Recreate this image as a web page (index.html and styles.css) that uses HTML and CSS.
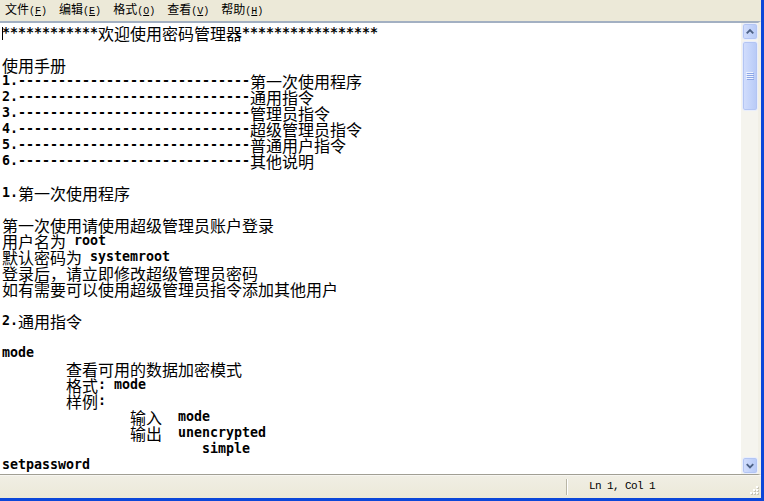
FILE: index.html
```html
<!DOCTYPE html>
<html lang="zh-CN">
<head>
<meta charset="utf-8">
<title>记事本</title>
<link rel="stylesheet" href="styles.css">
</head>
<body>
<div class="window">
  <nav class="menubar">
    <span class="menu-item">文件<span class="acc">(<u>F</u>)</span></span>
    <span class="menu-item">编辑<span class="acc">(<u>E</u>)</span></span>
    <span class="menu-item">格式<span class="acc">(<u>O</u>)</span></span>
    <span class="menu-item">查看<span class="acc">(<u>V</u>)</span></span>
    <span class="menu-item">帮助<span class="acc">(<u>H</u>)</span></span>
  </nav>
  <div class="editor">
<pre class="text"><span class="caret"></span>************<span class="c">欢迎使用密码管理器</span>*****************

<span class="c">使用手册</span>
1.-----------------------------<span class="c">第一次使用程序</span>
2.-----------------------------<span class="c">通用指令</span>
3.-----------------------------<span class="c">管理员指令</span>
4.-----------------------------<span class="c">超级管理员指令</span>
5.-----------------------------<span class="c">普通用户指令</span>
6.-----------------------------<span class="c">其他说明</span>

1.<span class="c">第一次使用程序</span>

<span class="c">第一次使用请使用超级管理员账户登录</span>
<span class="c">用户名为</span> root
<span class="c">默认密码为</span> systemroot
<span class="c">登录后，请立即修改超级管理员密码</span>
<span class="c">如有需要可以使用超级管理员指令添加其他用户</span>

2.<span class="c">通用指令</span>

mode
        <span class="c">查看可用的数据加密模式</span>
        <span class="c">格式</span>: mode
        <span class="c">样例</span>:
                <span class="c">输入</span>  mode
                <span class="c">输出</span>  unencrypted
                         simple
setpassword
</pre>
    <div class="scrollbar">
      <div class="sb-btn">
        <svg width="15" height="15" viewBox="0 0 15 15"><polyline points="4,9.5 7.5,6 11,9.5" fill="none" stroke="#4d6185" stroke-width="2"/></svg>
      </div>
      <div class="sb-track">
        <div class="sb-thumb">
          <svg width="8" height="8" viewBox="0 0 8 8">
            <rect x="0" y="0" width="7" height="1" fill="#eef3ff"/>
            <rect x="1" y="1" width="7" height="1" fill="#8ca6e6"/>
            <rect x="0" y="2" width="7" height="1" fill="#eef3ff"/>
            <rect x="1" y="3" width="7" height="1" fill="#8ca6e6"/>
            <rect x="0" y="4" width="7" height="1" fill="#eef3ff"/>
            <rect x="1" y="5" width="7" height="1" fill="#8ca6e6"/>
            <rect x="0" y="6" width="7" height="1" fill="#eef3ff"/>
            <rect x="1" y="7" width="7" height="1" fill="#8ca6e6"/>
          </svg>
        </div>
      </div>
      <div class="sb-btn">
        <svg width="15" height="15" viewBox="0 0 15 15"><polyline points="4,6 7.5,9.5 11,6" fill="none" stroke="#4d6185" stroke-width="2"/></svg>
      </div>
    </div>
  </div>
  <div class="statusbar">
    <div class="pane main"></div>
    <div class="pane pos">Ln 1, Col 1</div>
    <svg class="grip" width="12" height="12" viewBox="0 0 12 12">
      <rect x="9" y="1" width="2" height="2" fill="#c9c6b8"/>
      <rect x="6" y="4" width="2" height="2" fill="#c9c6b8"/>
      <rect x="9" y="4" width="2" height="2" fill="#c9c6b8"/>
      <rect x="3" y="7" width="2" height="2" fill="#c9c6b8"/>
      <rect x="6" y="7" width="2" height="2" fill="#c9c6b8"/>
      <rect x="9" y="7" width="2" height="2" fill="#c9c6b8"/>
      <rect x="8" y="0" width="2" height="2" fill="#fff"/>
      <rect x="5" y="3" width="2" height="2" fill="#fff"/>
      <rect x="8" y="3" width="2" height="2" fill="#fff"/>
      <rect x="2" y="6" width="2" height="2" fill="#fff"/>
      <rect x="5" y="6" width="2" height="2" fill="#fff"/>
      <rect x="8" y="6" width="2" height="2" fill="#fff"/>
    </svg>
  </div>
</div>
</body>
</html>
```
FILE: styles.css
```css
html, body {
  margin: 0;
  padding: 0;
}
body {
  width: 764px;
  height: 501px;
  overflow: hidden;
  background: #0c47d9;
}
.window {
  box-sizing: border-box;
  width: 764px;
  height: 501px;
  border-right: 3px solid #0c47d9;
  border-bottom: 3px solid #0c47d9;
  background: #ece9d8;
  display: flex;
  flex-direction: column;
}
.menubar {
  flex: none;
  height: 21px;
  display: flex;
  align-items: center;
  gap: 12px;
  padding-left: 5px;
  font-family: "Noto Sans CJK SC", sans-serif;
  font-size: 12px;
  line-height: 14px;
  color: #000;
}
.menu-item {
  white-space: nowrap;
}
.acc {
  font-family: "Liberation Mono", monospace;
  font-size: 10px;
}
.editor {
  flex: none;
  box-sizing: border-box;
  height: 454px;
  border-top: 2px solid #a3b0c2;
  border-bottom: 1px solid #a19f94;
  border-right: 3px solid #f1efe6;
  display: flex;
}
.text {
  flex: 1;
  margin: 0;
  padding: 2px 0 0 2px;
  background: #fff;
  color: #000;
  font-family: "DejaVu Sans Mono", monospace;
  font-weight: bold;
  font-size: 13.29px;
  line-height: 16px;
  white-space: pre;
  overflow: hidden;
}
.c {
  font-family: "Noto Sans CJK SC", sans-serif;
  font-weight: normal;
  font-size: 16px;
  line-height: 16px;
  vertical-align: top;
}
.caret {
  display: inline-block;
  width: 1px;
  height: 13px;
  margin: 2px -1px 0 0;
  background: #000;
  vertical-align: top;
}
.scrollbar {
  flex: none;
  width: 17px;
  display: flex;
  flex-direction: column;
  background: #f5f4ee;
}
.sb-btn, .sb-thumb {
  box-sizing: border-box;
  margin-left: 1px;
  width: 16px;
  border: 1px solid #e9eefc;
  border-radius: 3px;
  background: linear-gradient(to right, #d3defc, #c3d3fa 55%, #b7c9f6);
  box-shadow: inset 0 0 0 1px #b3c5f3;
  display: flex;
  align-items: center;
  justify-content: center;
}
.sb-btn {
  flex: none;
  height: 17px;
}
.sb-btn svg {
  display: block;
}
.sb-track {
  flex: 1;
  padding-top: 1px;
}
.sb-thumb {
  height: 70px;
}
.sb-thumb svg {
  display: block;
}
.statusbar {
  flex: 1;
  display: flex;
  align-items: flex-end;
  background: linear-gradient(#f0eee4, #ece9d8);
  border-top: 1px solid #f7f6f1;
}
.pane {
  box-sizing: border-box;
  height: 16px;
  margin-bottom: 3px;
}
.pane.main {
  width: 567px;
  border-right: 1px solid #b9b6a6;
  box-shadow: 1px 0 0 #ffffff;
}
.pane.pos {
  flex: 1;
  padding-left: 22px;
  font-family: "Liberation Mono", monospace;
  font-size: 11px;
  letter-spacing: -0.6px;
  line-height: 14px;
  color: #000;
}
.grip {
  flex: none;
  display: block;
  margin: 0 1px 0 0;
}
```
